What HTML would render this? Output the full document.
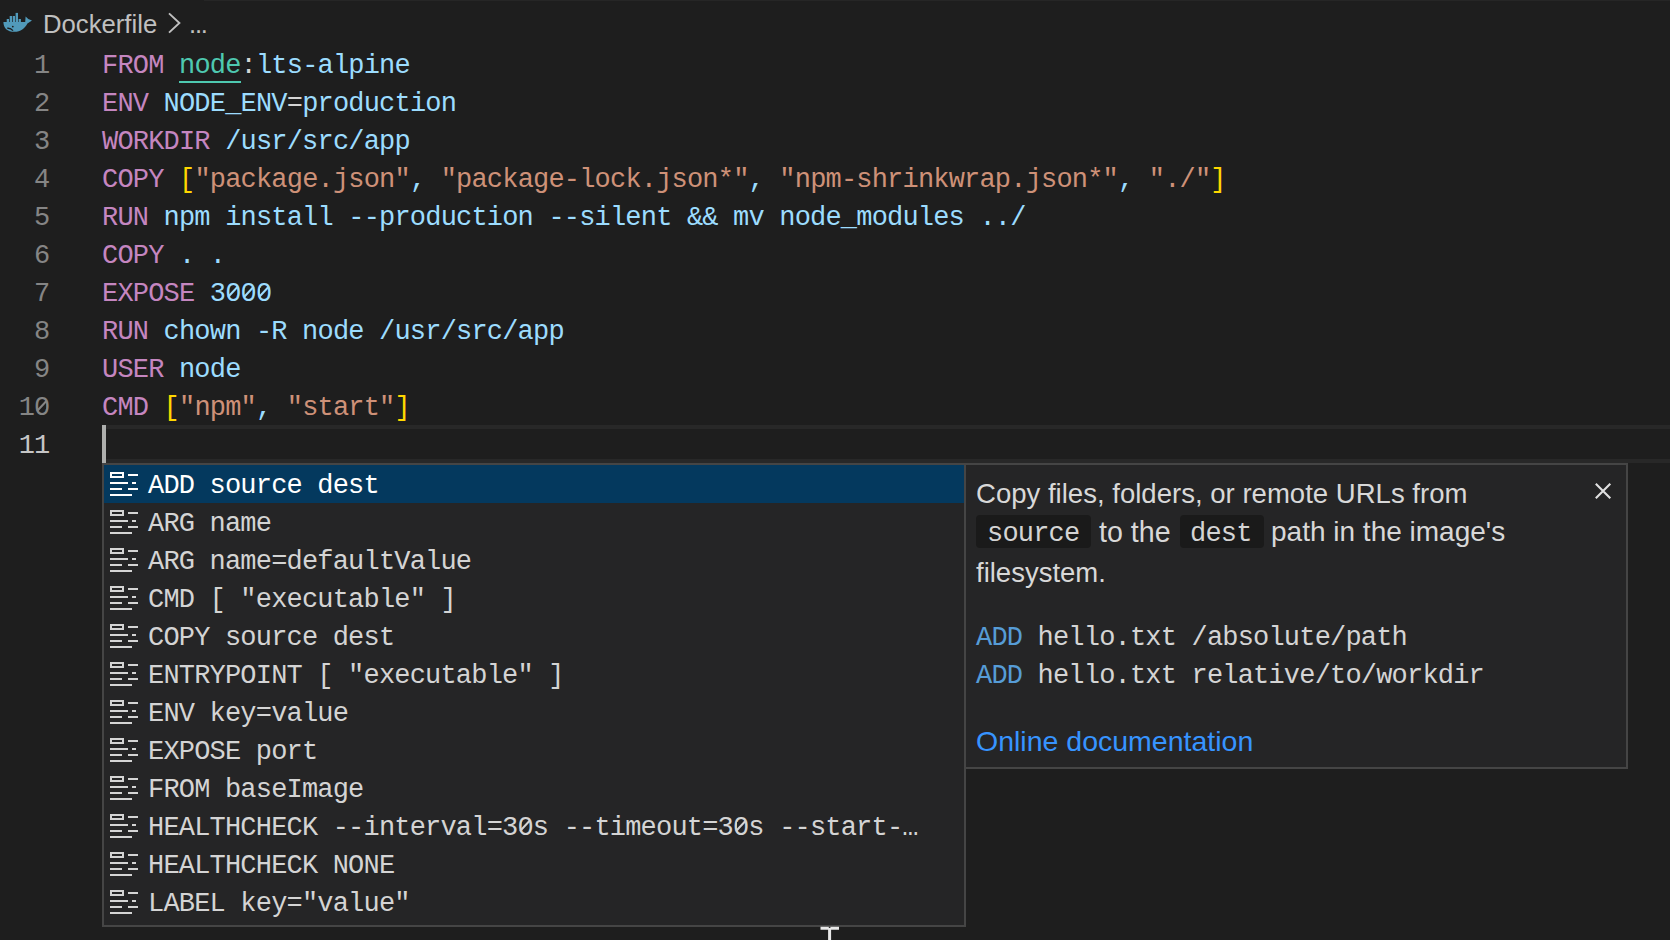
<!DOCTYPE html>
<html><head><meta charset="utf-8">
<style>
html,body{margin:0;padding:0}
body{width:1670px;height:940px;background:#1e1e1e;overflow:hidden;position:relative;font-family:"Liberation Sans",sans-serif}
.abs{position:absolute}
.mono{font-family:"Liberation Mono",monospace;font-size:27px;letter-spacing:-0.81px;white-space:pre}
.ln{position:absolute;left:0;width:49.5px;text-align:right;color:#858585;height:38px;line-height:38px;margin-top:2px}
.cl{position:absolute;left:102px;height:38px;line-height:38px;margin-top:2px;color:#9cdcfe}
.z{position:relative}.z::before{content:"";position:absolute;left:4.5px;top:9px;width:7px;height:7px;background:var(--bg,#1e1e1e)}.z::after{content:"";position:absolute;left:7px;top:6px;width:2.2px;height:13.5px;background:currentColor;transform:rotate(43deg)}
.k{color:#c586c0}.w{color:#d4d4d4}.s{color:#ce9178}.b{color:#ffd700}.t{color:#4ec9b0}
.hl{position:absolute;left:102px;top:425px;width:1568px;height:30px;border-top:4px solid #282828;border-bottom:4px solid #282828}
.cursor{position:absolute;left:102px;top:425px;width:4px;height:38px;background:#aeafad}
.list{--bg:#252526;position:absolute;left:102px;top:463px;width:860px;height:460px;border:2px solid #454545;background:#252526}
.item{position:absolute;left:0;width:860px;height:38px;line-height:38px;color:#d4d4d4}
.item.sel{background:#04395e;color:#fff}
.item svg{position:absolute;left:0;top:0}
.item .lbl{position:absolute;left:44px;top:2px}
.ds{font-size:28px;line-height:38px;color:#d8d8d8;white-space:pre}
.dc{line-height:38px;color:#d4d4d4}
.detail{position:absolute;left:964px;top:463px;width:660px;height:302px;border:2px solid #454545;background:#252526}
</style></head><body>
<div class="abs" style="left:204px;top:0;width:1466px;height:1px;background:#262626"></div>
<!-- breadcrumb -->
<svg class="abs" style="left:0;top:8px" width="36" height="28" viewBox="0 0 36 28">
  <g fill="#519aba">
    <rect x="6.7" y="11" width="2.3" height="3.2"/><rect x="9.7" y="8" width="2.3" height="6.2"/><rect x="12.7" y="8" width="2.3" height="6.2"/><rect x="15.6" y="4.9" width="2.4" height="9.3"/><rect x="18.6" y="11" width="2.3" height="3.2"/>
    <path d="M3.4 13.9 L25.2 13.9 L25.6 8.6 L28.3 11 L32 12.4 L27.4 15.4 C25 20 20.5 23.8 14.5 23.8 C7.2 23.8 3.4 19.8 3.4 13.9 Z"/>
  </g>
  <circle cx="12.8" cy="18.6" r="0.9" fill="#1e1e1e"/>
  <path d="M7.3 20.3 Q10.5 19.8 13 22.6" fill="none" stroke="#1e1e1e" stroke-width="1.4"/>
</svg>
<div class="abs" style="left:43px;top:6px;font-size:25.7px;line-height:36px;color:#c0c0c0;white-space:pre">Dockerfile</div>
<svg class="abs" style="left:166px;top:12px" width="18" height="24" viewBox="0 0 18 24"><path d="M3 1.4 L13.4 11 L3 20.6" fill="none" stroke="#c0c0c0" stroke-width="1.9"/></svg>
<div class="abs" style="left:189px;top:6px;font-size:25.5px;letter-spacing:-1.2px;line-height:36px;color:#c0c0c0;white-space:pre">...</div>

<!-- line numbers -->
<div class="mono">
<div class="ln" style="top:45px">1</div>
<div class="ln" style="top:83px">2</div>
<div class="ln" style="top:121px">3</div>
<div class="ln" style="top:159px">4</div>
<div class="ln" style="top:197px">5</div>
<div class="ln" style="top:235px">6</div>
<div class="ln" style="top:273px">7</div>
<div class="ln" style="top:311px">8</div>
<div class="ln" style="top:349px">9</div>
<div class="ln" style="top:387px">1<span class="z">0</span></div>
<div class="ln" style="top:425px;color:#c6c6c6">11</div>
</div>

<div class="hl"></div>
<div class="abs" style="left:179px;top:81px;width:62px;height:2px;background:#4ec9b0"></div>

<div class="mono">
<div class="cl" style="top:45px"><span class="k">FROM</span> <span class="t">node</span><span class="w">:</span>lts-alpine</div>
<div class="cl" style="top:83px"><span class="k">ENV</span> NODE_ENV<span class="w">=</span>production</div>
<div class="cl" style="top:121px"><span class="k">WORKDIR</span> /usr/src/app</div>
<div class="cl" style="top:159px"><span class="k">COPY</span> <span class="b">[</span><span class="s">"package.json"</span>, <span class="s">"package-lock.json*"</span>, <span class="s">"npm-shrinkwrap.json*"</span>, <span class="s">"./"</span><span class="b">]</span></div>
<div class="cl" style="top:197px"><span class="k">RUN</span> npm install --production --silent &amp;&amp; mv node_modules ../</div>
<div class="cl" style="top:235px"><span class="k">COPY</span> . .</div>
<div class="cl" style="top:273px"><span class="k">EXPOSE</span> 3<span class="z">0</span><span class="z">0</span><span class="z">0</span></div>
<div class="cl" style="top:311px"><span class="k">RUN</span> chown -R node /usr/src/app</div>
<div class="cl" style="top:349px"><span class="k">USER</span> node</div>
<div class="cl" style="top:387px"><span class="k">CMD</span> <span class="b">[</span><span class="s">"npm"</span>, <span class="s">"start"</span><span class="b">]</span></div>
</div>
<div class="cursor"></div>

<!-- suggest list -->
<div class="list mono">
  <div class="item sel" style="top:0px"><svg width="40" height="38"><g fill="currentColor"><path d="M6 7h14v6H6z M8 9v2h10V9z" fill-rule="evenodd"/><rect x="24" y="9" width="10" height="2"/><rect x="6" y="17" width="18" height="2"/><rect x="28" y="17" width="4" height="2"/><rect x="6" y="23" width="12" height="2"/><rect x="24" y="23" width="10" height="2"/><rect x="6" y="29" width="22" height="2"/></g></svg><span class="lbl">ADD source dest</span></div>
  <div class="item" style="top:38px"><svg width="40" height="38"><g fill="currentColor"><path d="M6 7h14v6H6z M8 9v2h10V9z" fill-rule="evenodd"/><rect x="24" y="9" width="10" height="2"/><rect x="6" y="17" width="18" height="2"/><rect x="28" y="17" width="4" height="2"/><rect x="6" y="23" width="12" height="2"/><rect x="24" y="23" width="10" height="2"/><rect x="6" y="29" width="22" height="2"/></g></svg><span class="lbl">ARG name</span></div>
  <div class="item" style="top:76px"><svg width="40" height="38"><g fill="currentColor"><path d="M6 7h14v6H6z M8 9v2h10V9z" fill-rule="evenodd"/><rect x="24" y="9" width="10" height="2"/><rect x="6" y="17" width="18" height="2"/><rect x="28" y="17" width="4" height="2"/><rect x="6" y="23" width="12" height="2"/><rect x="24" y="23" width="10" height="2"/><rect x="6" y="29" width="22" height="2"/></g></svg><span class="lbl">ARG name=defaultValue</span></div>
  <div class="item" style="top:114px"><svg width="40" height="38"><g fill="currentColor"><path d="M6 7h14v6H6z M8 9v2h10V9z" fill-rule="evenodd"/><rect x="24" y="9" width="10" height="2"/><rect x="6" y="17" width="18" height="2"/><rect x="28" y="17" width="4" height="2"/><rect x="6" y="23" width="12" height="2"/><rect x="24" y="23" width="10" height="2"/><rect x="6" y="29" width="22" height="2"/></g></svg><span class="lbl">CMD [ "executable" ]</span></div>
  <div class="item" style="top:152px"><svg width="40" height="38"><g fill="currentColor"><path d="M6 7h14v6H6z M8 9v2h10V9z" fill-rule="evenodd"/><rect x="24" y="9" width="10" height="2"/><rect x="6" y="17" width="18" height="2"/><rect x="28" y="17" width="4" height="2"/><rect x="6" y="23" width="12" height="2"/><rect x="24" y="23" width="10" height="2"/><rect x="6" y="29" width="22" height="2"/></g></svg><span class="lbl">COPY source dest</span></div>
  <div class="item" style="top:190px"><svg width="40" height="38"><g fill="currentColor"><path d="M6 7h14v6H6z M8 9v2h10V9z" fill-rule="evenodd"/><rect x="24" y="9" width="10" height="2"/><rect x="6" y="17" width="18" height="2"/><rect x="28" y="17" width="4" height="2"/><rect x="6" y="23" width="12" height="2"/><rect x="24" y="23" width="10" height="2"/><rect x="6" y="29" width="22" height="2"/></g></svg><span class="lbl">ENTRYPOINT [ "executable" ]</span></div>
  <div class="item" style="top:228px"><svg width="40" height="38"><g fill="currentColor"><path d="M6 7h14v6H6z M8 9v2h10V9z" fill-rule="evenodd"/><rect x="24" y="9" width="10" height="2"/><rect x="6" y="17" width="18" height="2"/><rect x="28" y="17" width="4" height="2"/><rect x="6" y="23" width="12" height="2"/><rect x="24" y="23" width="10" height="2"/><rect x="6" y="29" width="22" height="2"/></g></svg><span class="lbl">ENV key=value</span></div>
  <div class="item" style="top:266px"><svg width="40" height="38"><g fill="currentColor"><path d="M6 7h14v6H6z M8 9v2h10V9z" fill-rule="evenodd"/><rect x="24" y="9" width="10" height="2"/><rect x="6" y="17" width="18" height="2"/><rect x="28" y="17" width="4" height="2"/><rect x="6" y="23" width="12" height="2"/><rect x="24" y="23" width="10" height="2"/><rect x="6" y="29" width="22" height="2"/></g></svg><span class="lbl">EXPOSE port</span></div>
  <div class="item" style="top:304px"><svg width="40" height="38"><g fill="currentColor"><path d="M6 7h14v6H6z M8 9v2h10V9z" fill-rule="evenodd"/><rect x="24" y="9" width="10" height="2"/><rect x="6" y="17" width="18" height="2"/><rect x="28" y="17" width="4" height="2"/><rect x="6" y="23" width="12" height="2"/><rect x="24" y="23" width="10" height="2"/><rect x="6" y="29" width="22" height="2"/></g></svg><span class="lbl">FROM baseImage</span></div>
  <div class="item" style="top:342px"><svg width="40" height="38"><g fill="currentColor"><path d="M6 7h14v6H6z M8 9v2h10V9z" fill-rule="evenodd"/><rect x="24" y="9" width="10" height="2"/><rect x="6" y="17" width="18" height="2"/><rect x="28" y="17" width="4" height="2"/><rect x="6" y="23" width="12" height="2"/><rect x="24" y="23" width="10" height="2"/><rect x="6" y="29" width="22" height="2"/></g></svg><span class="lbl">HEALTHCHECK --interval=3<span class="z">0</span>s --timeout=3<span class="z">0</span>s --start-…</span></div>
  <div class="item" style="top:380px"><svg width="40" height="38"><g fill="currentColor"><path d="M6 7h14v6H6z M8 9v2h10V9z" fill-rule="evenodd"/><rect x="24" y="9" width="10" height="2"/><rect x="6" y="17" width="18" height="2"/><rect x="28" y="17" width="4" height="2"/><rect x="6" y="23" width="12" height="2"/><rect x="24" y="23" width="10" height="2"/><rect x="6" y="29" width="22" height="2"/></g></svg><span class="lbl">HEALTHCHECK NONE</span></div>
  <div class="item" style="top:418px"><svg width="40" height="38"><g fill="currentColor"><path d="M6 7h14v6H6z M8 9v2h10V9z" fill-rule="evenodd"/><rect x="24" y="9" width="10" height="2"/><rect x="6" y="17" width="18" height="2"/><rect x="28" y="17" width="4" height="2"/><rect x="6" y="23" width="12" height="2"/><rect x="24" y="23" width="10" height="2"/><rect x="6" y="29" width="22" height="2"/></g></svg><span class="lbl">LABEL key="value"</span></div>
</div>

<!-- detail -->
<div class="detail"></div>
<div class="abs" style="left:976px;top:515px;width:115px;height:33px;background:#1a1a1a;border-radius:4px"></div>
<div class="abs" style="left:1180px;top:515px;width:84px;height:33px;background:#1a1a1a;border-radius:4px"></div>
<div class="abs ds" style="left:976px;top:475px;font-size:27.55px">Copy files, folders, or remote URLs from</div>
<div class="abs ds" style="left:1099px;top:513px;font-size:28.6px">to the</div>
<div class="abs ds" style="left:1271px;top:513px">path in the image's</div>
<div class="abs ds" style="left:976px;top:554px;font-size:27.5px">filesystem.</div>
<div class="abs mono dc" style="left:987px;top:515px">source</div>
<div class="abs mono dc" style="left:1190px;top:515px">dest</div>
<div class="abs mono dc" style="left:976px;top:619px"><span style="color:#569cd6">ADD</span> hello.txt /absolute/path</div>
<div class="abs mono dc" style="left:976px;top:657px"><span style="color:#569cd6">ADD</span> hello.txt relative/to/workdir</div>
<div class="abs ds" style="left:976px;top:722px;color:#3794ff;font-size:28.5px">Online documentation</div>
<svg class="abs" style="left:1590px;top:478px" width="26" height="26" viewBox="0 0 26 26"><path d="M5.8 5.8 L20.3 20.3 M20.3 5.8 L5.8 20.3" stroke="#e0e0e0" stroke-width="2.1"/></svg>
<svg class="abs" style="left:818px;top:924px" width="24" height="16" viewBox="0 0 24 16"><path d="M2.5 4.2 H21 M11.6 4.2 V16" stroke="#e8e8e8" stroke-width="3" fill="none"/><rect x="10.8" y="2.7" width="1.6" height="1.2" fill="#1e1e1e"/></svg>
</body></html>
